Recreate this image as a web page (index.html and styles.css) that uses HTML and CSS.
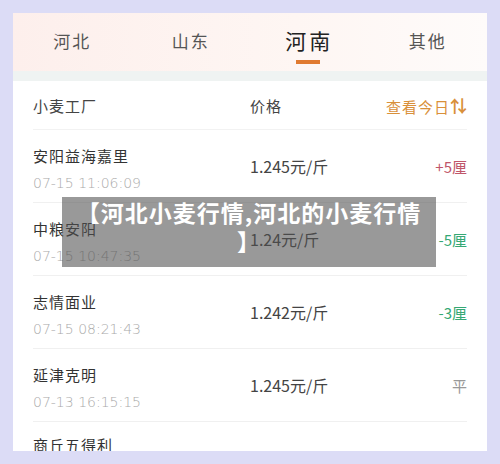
FILE: index.html
```html
<!DOCTYPE html>
<html lang="zh-CN">

<head>
    <meta charset="UTF-8">
    <meta name="viewport" content="width=device-width, initial-scale=1.0">
    <title>河北小麦行情</title>
    <link rel="stylesheet" href="styles.css">
</head>

<body>
    <section class="card">
        <!-- 省份切换 -->
        <nav class="tabs">
            <span class="tab">河北</span>
            <span class="tab">山东</span>
            <span class="tab active">河南</span>
            <span class="tab">其他</span>
        </nav>
        <div class="gap"></div>

        <!-- 表头 -->
        <div class="head">
            <span class="col-name">小麦工厂</span>
            <span class="col-price">价格</span>
            <span class="col-sort">查看今日<i class="arrows">⇅</i></span>
        </div>

        <!-- 列表 -->
        <ul class="list">
            <li class="row">
                <div class="info">
                    <p class="name">安阳益海嘉里</p>
                    <p class="time">07-15 11:06:09</p>
                </div>
                <span class="price">1.245元/斤</span>
                <span class="change up">+5厘</span>
            </li>
            <li class="row">
                <div class="info">
                    <p class="name">中粮安阳</p>
                    <p class="time">07-15 10:47:35</p>
                </div>
                <span class="price">1.24元/斤</span>
                <span class="change down">-5厘</span>
            </li>
            <li class="row">
                <div class="info">
                    <p class="name">志情面业</p>
                    <p class="time">07-15 08:21:43</p>
                </div>
                <span class="price">1.242元/斤</span>
                <span class="change down">-3厘</span>
            </li>
            <li class="row">
                <div class="info">
                    <p class="name">延津克明</p>
                    <p class="time">07-13 16:15:15</p>
                </div>
                <span class="price">1.245元/斤</span>
                <span class="change flat">平</span>
            </li>
            <li class="row last">
                <div class="info">
                    <p class="name">商丘五得利</p>
                </div>
            </li>
        </ul>

        <!-- 标题浮层 -->
        <div class="caption">【河北小麦行情,河北的小麦行情<br>】</div>
    </section>
</body>

</html>
```

FILE: styles.css
```css
* {
    box-sizing: border-box;
}

body {
    margin: 0;
    height: 464px;
    padding: 13px 13px 0;
    background-color: #dcdcf6;
    overflow: hidden;
    font-family: "Noto Sans CJK SC", "Noto Sans", sans-serif;
}

.card {
    position: relative;
    height: 438px;
    background-color: #fff;
    overflow: hidden;
}

.tabs {
    height: 58px;
    display: flex;
    background: linear-gradient(90deg, #fdefec, #fef6f3 60%, #fefbfa);
}

.tabs .tab {
    flex: 1;
    display: flex;
    justify-content: center;
    padding-top: 16px;
    font-size: 17px;
    line-height: 24px;
    color: #555;
    letter-spacing: 2px;
}

.tabs .tab.active {
    position: relative;
    padding-top: 13px;
    font-size: 21px;
    line-height: 28px;
    color: #222;
    letter-spacing: 3px;
}

.tabs .tab.active::after {
    content: "";
    position: absolute;
    left: 50%;
    top: 47px;
    width: 24px;
    height: 4px;
    margin-left: -13px;
    background-color: #e07a30;
}

.gap {
    height: 10px;
    background-color: #eff3f2;
}

.head {
    height: 49px;
    margin: 0 20px;
    display: flex;
    align-items: center;
    font-size: 15px;
    color: #444;
    border-bottom: 1px solid #f2f2f2;
}

.head .col-name {
    width: 217px;
    letter-spacing: 1px;
}

.head .col-price {
    flex: 1;
    letter-spacing: 1px;
}

.head .col-sort {
    color: #d9903a;
    letter-spacing: 1px;
}

.head .arrows {
    font-style: normal;
    font-weight: bold;
    font-size: 17px;
    letter-spacing: 0;
}

.list {
    margin: 0 20px;
    padding: 0;
    list-style: none;
}

.row {
    height: 73px;
    display: flex;
    align-items: center;
    border-bottom: 1px solid #f0f0f0;
}

.row .info {
    width: 217px;
    padding-top: 7px;
}

.row.last {
    align-items: flex-start;
}

.row.last .info {
    padding-top: 13px;
}

.row .name {
    margin: 0 0 7px;
    font-size: 15px;
    line-height: 20px;
    color: #333;
    letter-spacing: 1px;
}

.row .time {
    margin: 0;
    font-size: 14px;
    line-height: 20px;
    color: #aaa;
    font-family: "DejaVu Sans", sans-serif;
    font-weight: 300;
}

.row .price {
    flex: 1;
    font-size: 16px;
    color: #444;
}

.row .change {
    font-size: 15px;
}

.change.up {
    color: #c0566a;
}

.change.down {
    color: #35a874;
}

.change.flat {
    color: #999;
}

.caption {
    position: absolute;
    left: 49px;
    top: 184px;
    width: 374px;
    height: 70px;
    padding-top: 1px;
    background-color: rgba(80, 80, 80, 0.58);
    color: #fff;
    font-size: 23px;
    font-weight: bold;
    line-height: 29px;
    letter-spacing: 1px;
    text-align: center;
    white-space: nowrap;
}
```
